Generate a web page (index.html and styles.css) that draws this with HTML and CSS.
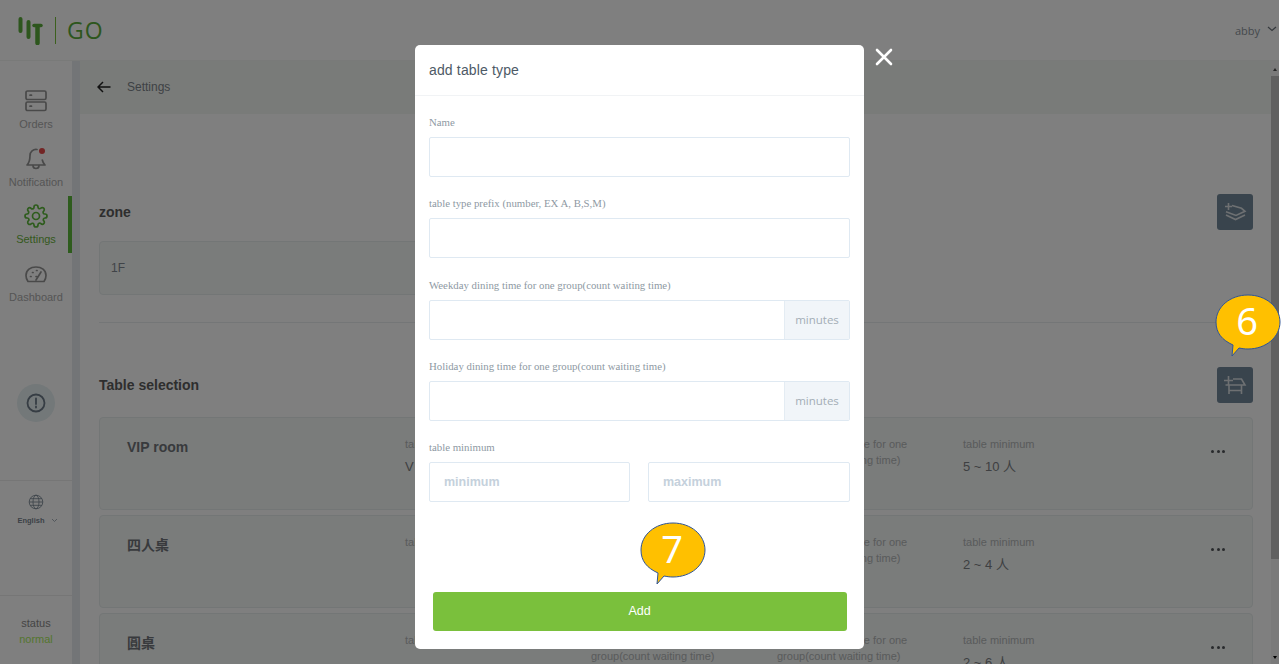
FILE: index.html
```html
<!DOCTYPE html>
<html lang="en">
<head>
<meta charset="utf-8">
<title>add table type</title>
<link rel="stylesheet" href="styles.css">
</head>
<body>
<div class="page">
  <header class="topbar">
    <div class="logo">
      <svg class="logo-mark" width="26" height="28" viewBox="0 0 26 28">
        <path d="M2.500 2v12M10.500 5v15" class="logo-bars"/>
        <path d="M19.500 10v16" class="logo-stem"/>
        <path d="M16 8.500h7" class="logo-cap"/>
      </svg>
      <span class="logo-line"></span>
      <span class="logo-text">GO</span>
    </div>
    <div class="user">
      <span>abby</span>
      <svg width="10" height="6" viewBox="0 0 10 6" class="user-chev"><path d="M1 1l4 3.500L9 1"/></svg>
    </div>
  </header>
  <div class="shell">
    <nav class="sidebar">
      <div class="nav-list">
        <a class="nav-item">
          <svg class="nav-icon" width="24" height="24" viewBox="0 0 24 24"><rect x="2" y="2" width="20" height="8.500" rx="1.500"/><rect x="2" y="13" width="20" height="8.500" rx="1.500"/><path d="M6 6.200h1.500M6 17.200h1.500"/></svg>
          <span>Orders</span>
        </a>
        <a class="nav-item">
          <svg class="nav-icon" width="24" height="24" viewBox="0 0 24 24"><path d="M13 2.500a6 6 0 0 0-7 6c0 5-.5 7-3 9.500h18c-1.500-1.500-2.300-3-2.700-5"/><path d="M9 18.500a3 3 0 0 0 6 0"/><circle class="nav-dot" cx="18" cy="4" r="3"/></svg>
          <span>Notification</span>
        </a>
        <a class="nav-item active">
          <svg class="nav-icon" width="24" height="24" viewBox="0 0 24 24"><circle cx="12" cy="12" r="3.500"/><path d="M19.400 15a1.650 1.650 0 0 0 .33 1.820l.06.06a2 2 0 1 1-2.830 2.830l-.06-.06a1.650 1.650 0 0 0-2.900 1.170V21a2 2 0 0 1-4 0v-.09a1.650 1.650 0 0 0-2.800-1.170l-.06.06a2 2 0 1 1-2.830-2.830l.06-.06A1.650 1.650 0 0 0 3.200 14H3a2 2 0 0 1 0-4h.09A1.650 1.650 0 0 0 4.260 7.200l-.06-.06a2 2 0 1 1 2.830-2.830l.06.06A1.650 1.650 0 0 0 10 3.200V3a2 2 0 0 1 4 0v.09a1.650 1.650 0 0 0 2.800 1.170l.06-.06a2 2 0 1 1 2.830 2.830l-.06.06A1.650 1.650 0 0 0 20.800 10H21a2 2 0 0 1 0 4h-.09a1.650 1.650 0 0 0-1.510 1z"/></svg>
          <span>Settings</span>
        </a>
        <a class="nav-item">
          <svg class="nav-icon" width="24" height="24" viewBox="0 0 24 24"><path d="M4 19.500h16c1.500-2 2-3.500 2-6C22 8 17.500 5 12 5S2 8 2 13.500c0 2.500.5 4 2 6z"/><path d="M12 18l5-8M6.500 14.500h.6M8.500 10.500h.6M12.500 8.500h.6M12 14.500h.6"/></svg>
          <span>Dashboard</span>
        </a>
      </div>
      <div class="alert-wrap">
        <div class="alert">
          <svg width="20" height="20" viewBox="0 0 20 20"><circle cx="10" cy="10" r="8.500"/><path d="M10 5.500v5.500M10 13.500v1"/></svg>
        </div>
      </div>
      <div class="lang">
        <svg class="globe" width="16" height="16" viewBox="0 0 16 16"><circle cx="8" cy="8" r="6.800"/><ellipse cx="8" cy="8" rx="3" ry="6.800"/><path d="M1.200 8h13.600M2 4.700h12M2 11.300h12"/></svg>
        <div class="lang-row"><span>English</span><svg width="7" height="5" viewBox="0 0 7 5" class="lang-chev"><path d="M1 1l2.500 2.500L6 1"/></svg></div>
      </div>
      <div class="status">
        <span>status</span>
        <span class="status-ok">normal</span>
      </div>
    </nav>
    <div class="gutter"></div>
    <main class="main">
      <div class="subheader">
        <svg class="back" width="14" height="12" viewBox="0 0 14 12"><path d="M13.500 6H1M6 1L1 6l5 5"/></svg>
        <span>Settings</span>
      </div>
      <div class="content">
        <section class="zone-section">
          <div class="section-head">
            <h2>zone</h2>
            <button class="icon-btn" type="button" aria-label="add zone">
              <svg width="24" height="24" viewBox="0 0 24 24"><path d="M2 6.500h7M5.500 3v7"/><path d="M9 5.500l9.500 2.800 3.500 3-9 4.200L3 11.700"/><path d="M3 15l9.500 4.500L22 15"/></svg>
            </button>
          </div>
          <div class="zone-card">1F</div>
        </section>
        <section class="table-section">
          <div class="section-head">
            <h2>Table selection</h2>
            <button class="icon-btn" type="button" aria-label="add table">
              <svg width="24" height="24" viewBox="0 0 24 24"><path d="M1 7.500h9M5.500 3v9"/><path d="M10 6h8.500l3.500 6H2.500"/><path d="M6 12v9M18.500 12v9M6 17.500h12.500"/></svg>
            </button>
          </div>
          <div class="table-list">
            <article class="table-card">
              <h3>VIP room</h3>
              <div class="cell"><p class="cell-label">table type prefix</p><p class="cell-value">V</p></div>
              <div class="cell"><p class="cell-label">Weekday dining time for one<br>group(count waiting time)</p></div>
              <div class="cell"><p class="cell-label">Holiday dining time for one<br>group(count waiting time)</p></div>
              <div class="cell"><p class="cell-label">table minimum</p><p class="cell-value">5 ~ 10 人</p></div>
              <div class="dots"><i></i><i></i><i></i></div>
            </article>
            <article class="table-card">
              <h3>四人桌</h3>
              <div class="cell"><p class="cell-label">table type prefix</p></div>
              <div class="cell"><p class="cell-label">Weekday dining time for one<br>group(count waiting time)</p></div>
              <div class="cell"><p class="cell-label">Holiday dining time for one<br>group(count waiting time)</p></div>
              <div class="cell"><p class="cell-label">table minimum</p><p class="cell-value">2 ~ 4 人</p></div>
              <div class="dots"><i></i><i></i><i></i></div>
            </article>
            <article class="table-card">
              <h3>圓桌</h3>
              <div class="cell"><p class="cell-label">table type prefix</p></div>
              <div class="cell"><p class="cell-label">Weekday dining time for one<br>group(count waiting time)</p></div>
              <div class="cell"><p class="cell-label">Holiday dining time for one<br>group(count waiting time)</p></div>
              <div class="cell"><p class="cell-label">table minimum</p><p class="cell-value">2 ~ 6 人</p></div>
              <div class="dots"><i></i><i></i><i></i></div>
            </article>
          </div>
        </section>
      </div>
    </main>
    <div class="scrollbar">
      <span class="arrow-up"></span>
      <span class="thumb"></span>
      <span class="arrow-down"></span>
    </div>
  </div>
  <div class="overlay"></div>
</div>

<div class="modal">
  <div class="modal-head">add table type</div>
  <form class="modal-body">
    <label class="field-label">Name</label>
    <div class="input-box"></div>
    <label class="field-label">table type prefix (number, EX A, B,S,M)</label>
    <div class="input-box"></div>
    <label class="field-label">Weekday dining time for one group(count waiting time)</label>
    <div class="input-box"><span class="addon">minutes</span></div>
    <label class="field-label">Holiday dining time for one group(count waiting time)</label>
    <div class="input-box"><span class="addon">minutes</span></div>
    <label class="field-label">table minimum</label>
    <div class="range-row">
      <div class="input-box placeholder">minimum</div>
      <div class="input-box placeholder">maximum</div>
    </div>
    <button class="add-btn" type="button">Add</button>
  </form>
</div>

<svg class="close" width="18" height="18" viewBox="0 0 18 18"><path d="M2 2l14 14M16 2L2 16"/></svg>

<svg class="callout callout-six" width="70" height="66" viewBox="0 0 70 66">
  <path d="M19 52C8 47 2 40 2 29 2 14 16 2 34 2s32 12 32 27-14 27-32 27c-4 0-6-.5-9-1l-7 8z"/>
  <text x="33" y="42">6</text>
</svg>
<svg class="callout callout-seven" width="70" height="66" viewBox="0 0 70 66">
  <path d="M19 52C8 47 2 40 2 29 2 14 16 2 34 2s32 12 32 27-14 27-32 27c-4 0-6-.5-9-1l-7 8z"/>
  <text x="33" y="42">7</text>
</svg>
</body>
</html>
```
FILE: styles.css
```css
* { box-sizing: border-box; }
html, body { margin: 0; padding: 0; }
body {
  width: 1285px;
  height: 664px;
  overflow: hidden;
  background: #fff;
  font-family: "Liberation Sans", "Noto Sans CJK TC", sans-serif;
}
.page {
  position: relative;
  width: 1279px;
  height: 664px;
  display: flex;
  flex-direction: column;
  background: #fff;
  overflow: hidden;
}
.overlay {
  position: absolute;
  inset: 0;
  background: rgba(0, 0, 0, .5);
}

/* top bar */
.topbar {
  height: 61px;
  flex: none;
  display: flex;
  justify-content: space-between;
  align-items: center;
  padding: 0 2px 0 18px;
  border-bottom: 1px solid #f2f4f2;
}
.logo { display: flex; align-items: center; }
.logo-mark { fill: none; stroke: #5aac3a; stroke-linecap: round; margin-top: 2px; }
.logo-bars { stroke-width: 4; }
.logo-stem { stroke-width: 4.500; }
.logo-cap { stroke-width: 3.500; }
.logo-line { width: 1px; height: 27px; background: #79c03c; margin: 0 11px 0 11px; }
.logo-text {
  font-family: "Open Sans", sans-serif;
  font-weight: 400;
  font-size: 23px;
  letter-spacing: 1px;
  color: #5aac3a;
  line-height: 27px;
}
.user {
  display: flex;
  align-items: flex-start;
  gap: 7px;
  font-family: "Open Sans", sans-serif;
  font-size: 11px;
  color: #8a929a;
}
.user-chev { fill: none; stroke: #6c747c; stroke-width: 1.300; margin-top: 3px; }

.shell { flex: 1; display: flex; min-height: 0; }

/* sidebar */
.sidebar {
  width: 72px;
  flex: none;
  display: flex;
  flex-direction: column;
  background: #fff;
}
.nav-list { padding-top: 28px; display: flex; flex-direction: column; }
.nav-item {
  position: relative;
  height: 57.500px;
  display: flex;
  flex-direction: column;
  align-items: center;
  font-size: 11px;
  line-height: 14px;
  color: #ababab;
}
.nav-item.active { color: #6ab23c; }
.nav-item.active::after {
  content: "";
  position: absolute;
  right: 0;
  top: -8px;
  width: 4px;
  height: 57px;
  background: #5cb83a;
}
.nav-icon {
  fill: none;
  stroke: #939393;
  stroke-width: 1.700;
  margin-bottom: 4px;
  stroke-linecap: round;
  stroke-linejoin: round;
}
.active .nav-icon { stroke: #5cb83a; }
.nav-dot { fill: #e64a4a; stroke: none; }
.alert-wrap {
  height: 172px;
  display: flex;
  align-items: flex-end;
  justify-content: center;
  padding-bottom: 58px;
  border-bottom: 1px solid #ececec;
  margin-top: -10.500px;
}
.alert {
  width: 38px;
  height: 38px;
  border-radius: 50%;
  background: #e6f0f2;
  display: flex;
  align-items: center;
  justify-content: center;
}
.alert svg { fill: none; stroke: #6c7a88; stroke-width: 1.800; stroke-linecap: round; }
.lang {
  height: 115px;
  padding-top: 13px;
  display: flex;
  flex-direction: column;
  align-items: center;
  border-bottom: 1px solid #ececec;
}
.globe { fill: none; stroke: #7f8c98; stroke-width: .9; }
.lang-row {
  display: flex;
  align-items: center;
  gap: 6px;
  margin: 5px 0 0 3px;
  font-size: 7.500px;
  line-height: 12px;
  font-weight: bold;
  color: #78848e;
}
.lang-chev { fill: none; stroke: #9aa6b0; stroke-width: .9; }
.status {
  display: flex;
  flex-direction: column;
  align-items: center;
  padding-top: 19px;
  font-size: 11px;
  line-height: 16px;
  color: #8a8a8a;
}
.status-ok { color: #a8ec5c; }

.gutter { width: 8px; flex: none; background: #e6ebef; }

/* main */
.main { flex: 1; min-width: 0; background: #fff; overflow: hidden; }
.subheader {
  height: 53px;
  display: flex;
  align-items: center;
  padding: 0 0 2px 17px;
  gap: 16px;
  background: #f3f6f3;
  font-size: 12px;
  color: #7c848a;
}
.back { fill: none; stroke: #222; stroke-width: 1.500; }
.content { padding: 80px 18px 0 19px; }
.section-head {
  display: flex;
  justify-content: space-between;
  align-items: center;
  height: 36px;
}
h2 { margin: 0 0 1px; font-size: 14px; line-height: 18px; color: #5c5c5c; }
.icon-btn {
  width: 36px;
  height: 36px;
  padding: 0;
  border: 0;
  border-radius: 3px;
  background: #73899a;
  display: flex;
  align-items: center;
  justify-content: center;
}
.icon-btn svg { fill: none; stroke: #fff; stroke-width: 1.600; opacity: .75; }
.zone-section {
  padding-bottom: 27px;
  border-bottom: 1px solid #e9edee;
}
.zone-card {
  margin-top: 11px;
  width: 420px;
  height: 54px;
  padding-left: 11px;
  display: flex;
  align-items: center;
  background: #f5f8f6;
  border: 1px solid #e6eced;
  border-radius: 4px;
  font-size: 12px;
  color: #808890;
}
.table-section { padding-top: 44px; }
.table-list { margin-top: 13.500px; display: flex; flex-direction: column; gap: 5px; }
.table-card {
  height: 93px;
  flex: none;
  display: grid;
  grid-template-columns: 278px 186px 186px 186px 1fr auto;
  padding: 19px 27px 0 27px;
  background: #f5f8f6;
  border: 1px solid #e6eced;
  border-radius: 4px;
}
h3 {
  margin: 0;
  font-size: 14px;
  line-height: 20px;
  font-weight: bold;
  color: #70757a;
}
.cell { font-size: 11px; margin-top: -1px; }
.cell-label { margin: 0; line-height: 16px; color: #b2b6b8; }
.cell-value { margin: 7px 0 0; font-size: 13px; line-height: 16px; color: #7c8084; }
.dots { display: flex; gap: 2.500px; padding-top: 13px; }
.dots i { width: 3px; height: 3px; border-radius: 50%; background: #505458; }

/* scrollbar */
.scrollbar {
  width: 8px;
  flex: none;
  background: #f4f4f4;
  position: relative;
}
.thumb {
  position: absolute;
  left: 0;
  top: 15px;
  width: 8px;
  height: 483px;
  background: #c0c0c0;
}
.arrow-up, .arrow-down {
  position: absolute;
  left: 2px;
  border-left: 2.500px solid transparent;
  border-right: 2.500px solid transparent;
}
.arrow-up { top: 7px; border-bottom: 3px solid #505050; }
.arrow-down { bottom: 5px; border-top: 3px solid #000; }

/* modal */
.modal {
  position: absolute;
  left: 415px;
  top: 45px;
  width: 449px;
  height: 604px;
  background: #fff;
  border-radius: 5px;
}
.modal-head {
  height: 51px;
  padding: 17px 14px 0;
  border-bottom: 1px solid #f1f3f5;
  font-size: 14px;
  letter-spacing: .15px;
  line-height: 16px;
  color: #4d5a66;
}
.modal-body { padding: 18px 14px 0; display: block; }
.field-label {
  display: block;
  font-family: "Liberation Serif", serif;
  font-size: 10.800px;
  line-height: 16px;
  margin-bottom: 7px;
  color: #8e99a3;
}
.input-box {
  height: 40px;
  margin-bottom: 18.300px;
  border: 1px solid #dfe9f2;
  border-radius: 2px;
  display: flex;
  justify-content: flex-end;
  background: #fff;
}
.addon {
  width: 65px;
  display: flex;
  align-items: center;
  justify-content: center;
  background: #f1f5f9;
  border-left: 1px solid #e4ecf3;
  font-family: "Open Sans", sans-serif;
  font-size: 11.500px;
  color: #a3adb6;
}
.range-row { display: flex; gap: 18px; }
.range-row .input-box { flex: 1; }
.range-row .input-box:first-child { flex: none; width: 201px; }
.placeholder {
  justify-content: flex-start;
  align-items: center;
  padding-left: 14px;
  font-size: 12.500px;
  font-weight: bold;
  color: #c5d1dc;
}
.add-btn {
  display: block;
  width: 414px;
  height: 39.500px;
  margin: 71.200px 0 0 3.500px;
  border: 0;
  border-radius: 3px;
  background: #7ac03c;
  color: #fff;
  font-family: "Liberation Sans", sans-serif;
  font-size: 12.500px;
}

/* close */
.close {
  position: absolute;
  left: 875px;
  top: 48px;
  fill: none;
  stroke: #fff;
  stroke-width: 2.600;
  stroke-linecap: round;
}

/* callouts */
.callout { position: absolute; overflow: visible; }
.callout path { fill: #ffc000; stroke: #2f5597; stroke-width: 1; }
.callout text {
  fill: #fff;
  font-family: "Noto Sans", sans-serif;
  font-size: 38px;
  text-anchor: middle;
}
.callout-six { left: 1214px; top: 293px; }
.callout-seven { left: 639px; top: 521px; }
```
